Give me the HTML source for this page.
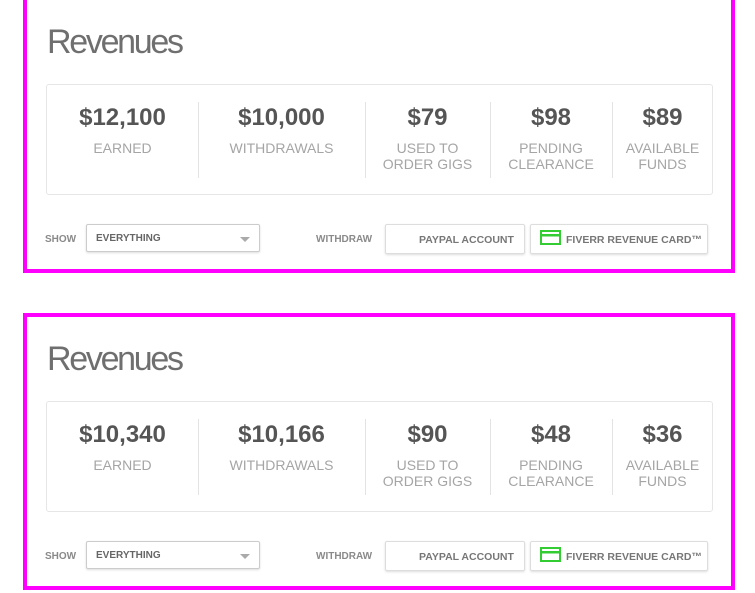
<!DOCTYPE html>
<html><head><style>
*{margin:0;padding:0;box-sizing:border-box}
body{width:755px;height:593px;background:#fff;font-family:"Liberation Sans",sans-serif;position:relative;overflow:hidden}
.box{position:absolute;left:23px;width:712px;border:4px solid #f0f;background:#fff}
.t{position:absolute;left:20px;font-size:34px;color:#6f6f6f;letter-spacing:-2.3px;font-weight:normal}
.card{position:absolute;left:19px;width:667px;height:111px;border:1px solid #e6e6e6;border-radius:3px}
.col{position:absolute;top:0;height:100%;text-align:center}
.col .n{position:absolute;left:0;right:0;top:19px;font-size:24px;font-weight:bold;color:#555}
.col .l{position:absolute;left:0;right:0;top:55px;font-size:14px;color:#a5a5a5;line-height:16px}
.div{position:absolute;top:17px;height:76px;border-left:1px solid #e3e3e3}
.sm{position:absolute;font-size:10px;color:#8a8a8a;font-weight:bold}
.sel{position:absolute;left:59px;width:174px;height:28px;border:1px solid #ccc;border-radius:2px;box-shadow:0 1px 2px #ddd;font-size:10px;font-weight:bold;color:#666;padding:8px 0 0 9px}
.sel:after{content:"";position:absolute;right:9px;top:12px;border:5px solid transparent;border-top:5px solid #aaa;border-bottom:0}
.btn{position:absolute;height:30px;border:1px solid #ddd;border-radius:2px;box-shadow:0 1px 2px #ddd;font-size:10.5px;font-weight:bold;color:#777;padding-top:9px}
</style></head><body>
<div class="box" style="top:-4px;height:277px">
  <div class="t" style="top:23px">Revenues</div>
  <div class="card" style="top:84px">
    <div class="col" style="left:0;width:151px"><div class="n">$12,100</div><div class="l">EARNED</div></div>
    <div class="div" style="left:151px"></div>
    <div class="col" style="left:151px;width:167px"><div class="n">$10,000</div><div class="l">WITHDRAWALS</div></div>
    <div class="div" style="left:318px"></div>
    <div class="col" style="left:318px;width:125px"><div class="n">$79</div><div class="l">USED TO<br>ORDER GIGS</div></div>
    <div class="div" style="left:443px"></div>
    <div class="col" style="left:443px;width:122px"><div class="n">$98</div><div class="l">PENDING<br>CLEARANCE</div></div>
    <div class="div" style="left:565px"></div>
    <div class="col" style="left:565px;width:101px"><div class="n">$89</div><div class="l">AVAILABLE<br>FUNDS</div></div>
  </div>
  <div class="sm" style="left:18px;top:234px">SHOW</div>
  <div class="sel" style="top:224px">EVERYTHING</div>
  <div class="sm" style="left:289px;top:234px">WITHDRAW</div>
  <div class="btn" style="left:358px;width:140px;top:224px;padding-left:33px">PAYPAL ACCOUNT</div>
  <div class="btn" style="left:503px;width:178px;top:224px;padding-left:35px"><svg style="position:absolute;left:9px;top:5px" width="21" height="15"><rect x="1" y="1" width="19" height="13" fill="none" stroke="#3c3" stroke-width="2"/><rect x="1" y="4" width="19" height="2.5" fill="#3c3"/></svg>FIVERR REVENUE CARD™</div>
</div>
<div class="box" style="top:313px;height:277px">
  <div class="t" style="top:23px">Revenues</div>
  <div class="card" style="top:84px">
    <div class="col" style="left:0;width:151px"><div class="n">$10,340</div><div class="l">EARNED</div></div>
    <div class="div" style="left:151px"></div>
    <div class="col" style="left:151px;width:167px"><div class="n">$10,166</div><div class="l">WITHDRAWALS</div></div>
    <div class="div" style="left:318px"></div>
    <div class="col" style="left:318px;width:125px"><div class="n">$90</div><div class="l">USED TO<br>ORDER GIGS</div></div>
    <div class="div" style="left:443px"></div>
    <div class="col" style="left:443px;width:122px"><div class="n">$48</div><div class="l">PENDING<br>CLEARANCE</div></div>
    <div class="div" style="left:565px"></div>
    <div class="col" style="left:565px;width:101px"><div class="n">$36</div><div class="l">AVAILABLE<br>FUNDS</div></div>
  </div>
  <div class="sm" style="left:18px;top:234px">SHOW</div>
  <div class="sel" style="top:224px">EVERYTHING</div>
  <div class="sm" style="left:289px;top:234px">WITHDRAW</div>
  <div class="btn" style="left:358px;width:140px;top:224px;padding-left:33px">PAYPAL ACCOUNT</div>
  <div class="btn" style="left:503px;width:178px;top:224px;padding-left:35px"><svg style="position:absolute;left:9px;top:5px" width="21" height="15"><rect x="1" y="1" width="19" height="13" fill="none" stroke="#3c3" stroke-width="2"/><rect x="1" y="4" width="19" height="2.5" fill="#3c3"/></svg>FIVERR REVENUE CARD™</div>
</div>
</body></html>
